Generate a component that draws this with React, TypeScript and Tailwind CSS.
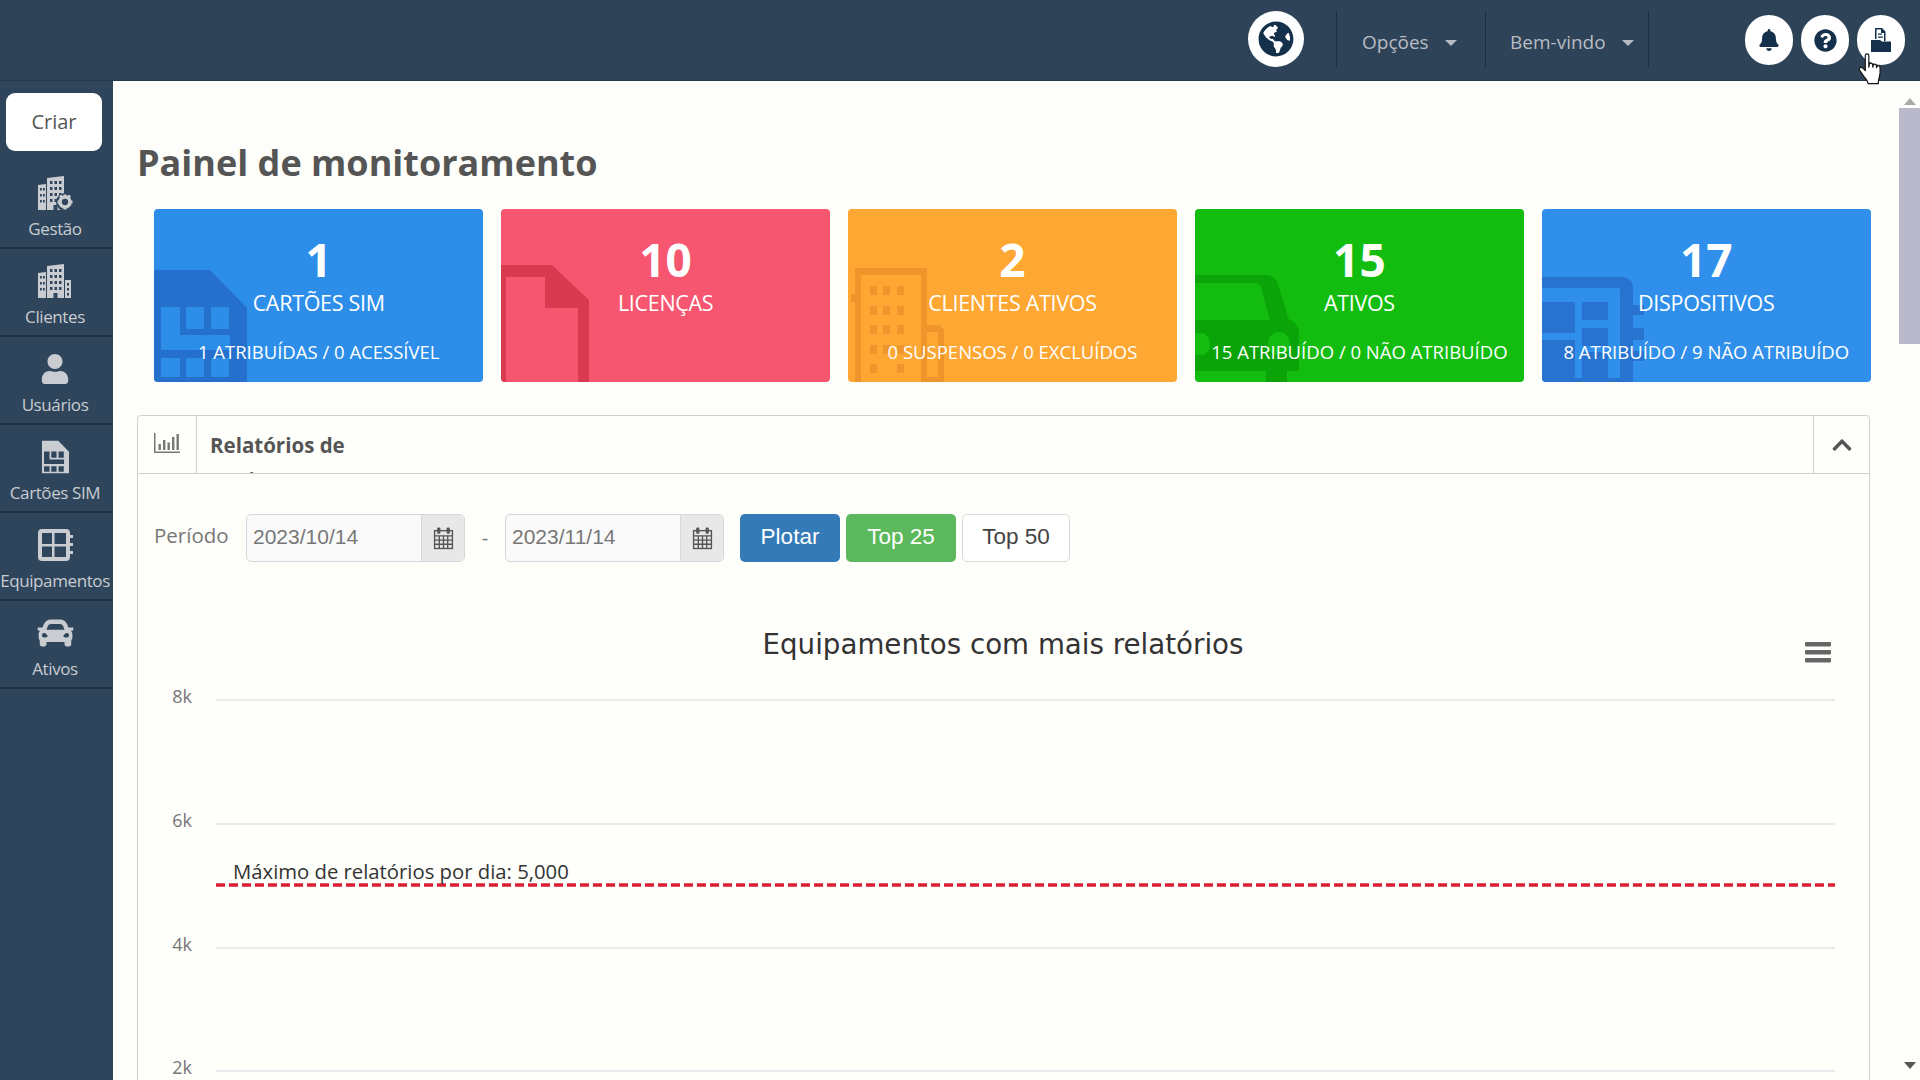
import React from 'react';
import { FaBell, FaCar, FaChevronUp, FaGlobeAmericas, FaQuestionCircle, FaUser } from 'react-icons/fa';

const simPath =
  'M0 0h56l37 38v74H0zM7 37v43h69V65H26V37zM32 37v22h18V37zM57 37v22h18V37zM7 88v19h19V88zM32 88v19h18V88zM57 88v19h18V88z';

const SimIcon = ({ className }: { className?: string }) => (
  <svg viewBox="0 0 93 112" className={className} fill="currentColor">
    <path fillRule="evenodd" d={simPath} />
  </svg>
);

const BuildingsIcon = ({ className, gear }: { className?: string; gear?: boolean }) => (
  <svg viewBox="0 0 34 34" className={className} fill="currentColor">
    <path
      fillRule="evenodd"
      d="M9 2l17-2v34H9zM12 5v3h2.500V5zM16.500 5v3H19V5zM21 5v3h2.500V5zM12 11v3h2.500v-3zM16.500 11v3H19v-3zM21 11v3h2.500v-3zM12 17v3h2.500v-3zM16.500 17v3H19v-3zM21 17v3h2.500v-3zM12 23v3h2.500v-3zM16.500 23v3H19v-3zM21 23v3h2.500v-3zM15.500 29v5h4v-5z"
    />
    <path fillRule="evenodd" d="M0 9l8-1v26H0zM2 12v2.500h1.800V12zM5 12v2.500h1.800V12zM2 18v2.500h1.800V18zM5 18v2.500h1.800V18zM2 24v2.500h1.800V24zM5 24v2.500h1.800V24z" />
    {gear ? (
      <g>
        <circle cx="27" cy="26" r="9" fill="#2e455c" />
        <circle cx="27" cy="26" r="5" fill="none" stroke="currentColor" strokeWidth="3.600" />
        <path d="M25.500 18.500h3v3h-3zM25.500 30.500h3v3h-3zM19.500 24.500h3v3h-3zM31.500 24.500h3v3h-3zM21 20.500l2-2 2 2-2 2zM29 28.500l2-2 2 2-2 2zM33 20.500l-2-2-2 2 2 2zM25 28.500l-2-2-2 2 2 2z" />
      </g>
    ) : (
      <path fillRule="evenodd" d="M27 16h6v18h-6zM29 19v2.500h2V19zM29 24v2.500h2V24zM29 29v2.500h2V29z" />
    )}
  </svg>
);

const DeviceIcon = ({ className }: { className?: string }) => (
  <svg viewBox="0 0 35 32" className={className} fill="currentColor">
    <path
      fillRule="evenodd"
      d="M4 0h24a4 4 0 0 1 4 4v24a4 4 0 0 1-4 4H4a4 4 0 0 1-4-4V4a4 4 0 0 1 4-4zM4 4v11h10V4zM16.500 4v11H28V4zM4 17.500V28h10V17.500zM16.500 17.500V28H28V17.500z"
    />
    <path d="M32 6h3v3h-3zM32 14h3v3h-3zM32 22h3v3h-3z" />
  </svg>
);

const CalendarIcon = () => (
  <svg viewBox="0 0 20 22" className="w-[21px] h-[24px] text-[#555]" fill="none" stroke="currentColor" strokeWidth="1.300">
    <rect x="1.500" y="4" width="17" height="17" fill="#e6e6e6" />
    <path d="M1.500 9h17M1.500 13h17M1.500 17h17M6 9v12M10 9v12M14 9v12" />
    <rect x="4" y="1" width="3" height="6" rx="1" fill="currentColor" stroke="none" />
    <rect x="13" y="1" width="3" height="6" rx="1" fill="currentColor" stroke="none" />
  </svg>
);

const ChartBarIcon = () => (
  <svg viewBox="0 0 26 20" className="w-[26px] h-[20px] text-[#777]" fill="currentColor">
    <path d="M0 0h1.500v18.500H26V20H0z" />
    <path d="M4.500 11h2.400v6H4.500zM9 7h2.400v10H9zM13.500 9.500h2.400V17h-2.400zM18 4h2.400v13H18zM22.500 1h2.400v16h-2.400z" />
  </svg>
);

const FolderDocIcon = () => (
  <svg viewBox="0 0 20 24" className="w-[20px] h-[24px] text-[#15304a]" fill="currentColor">
    <path d="M0 12h9l2 1.500h9V24H0z" />
    <path fillRule="evenodd" d="M4 0h7l3.500 3.500V13H13V5h-3V1.500H5.500V11H4z" />
    <path d="M7 5.500h4v1.300H7zM7 8.500h5v1.300H7z" />
  </svg>
);

const HandCursor = () => (
  <svg viewBox="0 0 20 28" className="absolute left-[1858px] top-[53px] w-[24px] h-[33px]" fill="#fff" stroke="#111" strokeWidth="1" strokeLinejoin="round">
    <path d="M6 2.200a1.500 1.500 0 0 1 3 0V12l.4-2.500a1.500 1.500 0 0 1 2.800.2L12.400 12l.3-1.600a1.400 1.400 0 0 1 2.700.3l.2 1.700.3-.9a1.400 1.400 0 0 1 2.600.5c.3 3.600.1 6.600-.7 9-.4 1.400-.8 3-.8 5H8.500c-.3-2-1.500-3.500-3-5.200L1.400 15c-.8-1-.5-2.200.4-2.700.8-.4 1.700 0 2.400.8L6 15z" />
  </svg>
);

const sideItems = [
  { label: 'Gestão', icon: <BuildingsIcon gear className="w-[36px] h-[34px]" /> },
  { label: 'Clientes', icon: <BuildingsIcon className="w-[34px] h-[34px]" /> },
  { label: 'Usuários', icon: <FaUser className="w-[28px] h-[30px]" /> },
  { label: 'Cartões SIM', icon: <SimIcon className="w-[27px] h-[34px]" /> },
  { label: 'Equipamentos', icon: <DeviceIcon className="w-[35px] h-[32px]" /> },
  { label: 'Ativos', icon: <FaCar className="w-[37px] h-[36px]" /> },
];

const ghost = 'absolute left-0 bottom-0 pointer-events-none';

const FileGhost = () => (
  <svg viewBox="0 0 88 117" className={`${ghost} w-[88px] h-[117px] text-[#d83a50]`} fill="currentColor">
    <path d="M0 0h51l37 35v82H77V43H44V12H5v105H0z" />
  </svg>
);

const BuildingGhost = () => (
  <svg viewBox="0 0 96 114" className={`${ghost} w-[96px] h-[114px] text-[#ee962b]`} fill="currentColor">
    <path fillRule="evenodd" d="M7 0h72v114H7zM13 7v107h60V7zM3 26h4v8H3z" />
    <path d="M79 57h13l4 5v52H79v-5h11V64H79z" />
    <path d="M22 18h7v9h-7zM35 18h7v9h-7zM49 18h7v9h-7zM22 38h7v9h-7zM35 38h7v9h-7zM49 38h7v9h-7zM22 57h7v9h-7zM35 57h7v9h-7zM49 57h7v9h-7zM22 77h7v9h-7zM35 77h7v9h-7zM49 77h7v9h-7zM22 96h7v9h-7zM49 96h7v9h-7z" />
  </svg>
);

const CarGhost = () => (
  <svg viewBox="0 0 106 107" className={`${ghost} w-[106px] h-[107px] text-[#0aa408]`} fill="currentColor">
    <path fillRule="evenodd" d="M0 0h70c6 0 11 3 13 9l11 36h2c4 3 8 6 8 13v38h-12v11H71V96H0zM0 8v37h75L66 12c-1-3-3-4-6-4zM0 58v22h5c8 0 10-6 10-11s-3-11-10-11zM84 57c-7 0-11 5-11 12s4 11 11 11 11-5 11-11-4-12-11-12z" />
  </svg>
);

const DeviceGhost = () => (
  <svg viewBox="0 0 102 105" className={`${ghost} w-[102px] h-[105px] text-[#2873cf]`} fill="currentColor">
    <path d="M0 0h80a11 11 0 0 1 11 11v94H78V13a2 2 0 0 0-2-2H0z" />
    <path d="M0 25h33v31H0zM0 63h33v38H0zM40 25h26v18H40zM40 51h26v18H40zM40 75h26v26H40zM0 101h78v4H0z" />
    <path d="M91 28h11v10H91zM91 51h11v12H91zM91 74h11v10H91z" />
  </svg>
);

const cards = [
  { value: '1', title: 'CARTÕES SIM', sub: '1 ATRIBUÍDAS / 0 ACESSÍVEL', bg: 'bg-[#2d8ee9]', icon: <SimIcon className={`${ghost} w-[93px] h-[112px] text-[#2470cc]`} /> },
  { value: '10', title: 'LICENÇAS', sub: '', bg: 'bg-[#f6566f]', icon: <FileGhost /> },
  { value: '2', title: 'CLIENTES ATIVOS', sub: '0 SUSPENSOS / 0 EXCLUÍDOS', bg: 'bg-[#fea733]', icon: <BuildingGhost /> },
  { value: '15', title: 'ATIVOS', sub: '15 ATRIBUÍDO / 0 NÃO ATRIBUÍDO', bg: 'bg-[#12bd0f]', icon: <CarGhost /> },
  { value: '17', title: 'DISPOSITIVOS', sub: '8 ATRIBUÍDO / 9 NÃO ATRIBUÍDO', bg: 'bg-[#2f8fea]', icon: <DeviceGhost /> },
];

const DateField = ({ value }: { value: string }) => (
  <div className="flex h-[48px] w-[219px] rounded-[5px] border border-[#d6d6dc] bg-[#fafafa]">
    <div className="flex-1 flex items-center pl-[6px] pb-[1px] font-['Liberation_Sans',sans-serif] text-[21px] text-[#777]">{value}</div>
    <div className="w-[43px] flex items-center justify-center bg-[#e8e8e8] border-l border-[#d6d6dc] rounded-r-[5px]">
      <CalendarIcon />
    </div>
  </div>
);

const grid = [700, 824, 948, 1071];
const gridLabels = ['8k', '6k', '4k', '2k'];

export default function App() {
  return (
    <div className="w-[1920px] h-[1080px] relative overflow-hidden flex flex-col bg-[#2e455c] font-['Open_Sans',sans-serif]">
      <header className="h-[81px] shrink-0 flex justify-end pr-[15px] bg-[#2e4358] border-b border-[#26374a]">
        <div className="mt-[11px] mr-[32px] w-[56px] h-[56px] rounded-full bg-white flex items-center justify-center">
          <FaGlobeAmericas className="w-[36px] h-[36px] text-[#15304a]" />
        </div>
        <div className="mt-[11px] h-[57px] w-[149px] border-l border-[#1f3040] flex items-center pl-[25px] pt-[6px] text-[19px] text-[#b8bcc2]">
          <span>Opções</span>
          <span className="ml-[16px] w-0 h-0 border-x-[6px] border-x-transparent border-t-[6px] border-t-[#b8bcc2]" />
        </div>
        <div className="mt-[11px] h-[57px] w-[164px] border-x border-[#1f3040] flex items-center pl-[24px] pt-[6px] text-[19px] text-[#b8bcc2]">
          <span>Bem-vindo</span>
          <span className="ml-[16px] w-0 h-0 border-x-[6px] border-x-transparent border-t-[6px] border-t-[#b8bcc2]" />
        </div>
        <div className="ml-[96px] mt-[15px] flex gap-[8px]">
          <div className="w-[48px] h-[50px] rounded-full bg-white flex items-center justify-center">
            <FaBell className="w-[20px] h-[22px] text-[#15304a]" />
          </div>
          <div className="w-[48px] h-[50px] rounded-full bg-white flex items-center justify-center">
            <FaQuestionCircle className="w-[23px] h-[23px] text-[#15304a]" />
          </div>
          <div className="w-[48px] h-[50px] rounded-full bg-white flex items-center justify-center">
            <FolderDocIcon />
          </div>
        </div>
      </header>

      <div className="flex-1 flex min-h-0">
        <aside className="w-[113px] shrink-0 flex flex-col text-[#c9ccd0] bg-[#2e455c]">
          <div className="h-[80px] shrink-0 pl-[6px] pt-[12px]">
            <div className="w-[96px] h-[58px] rounded-[9px] bg-white flex items-center justify-center text-[20px] text-[#555]">Criar</div>
          </div>
          {sideItems.map((item) => (
            <div key={item.label} className="h-[88px] shrink-0 pr-[3px] flex flex-col items-center border-b-2 border-[#20323f]">
              <div className="h-[34px] mt-[15px] flex items-center justify-center">{item.icon}</div>
              <div className="mt-[8px] text-[17px] leading-[22px] tracking-[-0.4px] whitespace-nowrap">{item.label}</div>
            </div>
          ))}
        </aside>

        <main className="flex-1 min-w-0 flex bg-[#fdfdf9] overflow-hidden">
          <div className="w-[1786px] shrink-0 pl-[24px]">
            <h1 className="mt-[60px] text-[36px] leading-[44px] font-bold text-[#555]">Painel de monitoramento</h1>
            <div className="ml-[17px] mt-[24px] w-[1717px] grid grid-cols-5 gap-[17.5px]">
              {cards.map((card) => (
                <div key={card.title} className={`relative h-[173px] rounded-[4px] overflow-hidden text-white text-center ${card.bg}`}>
                  {card.icon}
                  <div className="relative">
                    <div className="mt-[20px] text-[46px] leading-[60px] font-bold">{card.value}</div>
                    <div className="text-[21.500px] leading-[28px] tracking-[-0.3px]">{card.title}</div>
                    <div className="mt-[22px] text-[18.500px] leading-[26px]">{card.sub}</div>
                  </div>
                </div>
              ))}
            </div>

            <section className="mt-[33px] w-[1733px] border border-[#cfcfcf] rounded-t-[4px] bg-[#fefefb] h-[700px]">
              <div className="h-[58px] flex border-b border-[#cfcfcf]">
                <div className="w-[59px] border-r border-[#cfcfcf] flex items-center justify-center pb-[3px]">
                  <ChartBarIcon />
                </div>
                <div className="flex-1 overflow-hidden pl-[13px] pt-[12px] text-[20.500px] leading-[35px] font-bold text-[#555]">
                  <div>Relatórios de</div>
                  <div>equipamentos</div>
                </div>
                <div className="w-[56px] border-l border-[#cfcfcf] flex items-center justify-center">
                  <FaChevronUp className="w-[22px] h-[22px] text-[#555]" />
                </div>
              </div>

              <div className="pt-[39px] pl-[16px] flex items-center h-[88px]">
                <span className="w-[92px] mb-[4px] text-[20.500px] text-[#777]">Período</span>
                <DateField value="2023/10/14" />
                <span className="w-[40px] text-center text-[20px] text-[#777]">-</span>
                <DateField value="2023/11/14" />
                <div className="ml-[16px] flex gap-[6px] font-['Liberation_Sans',sans-serif] text-[22.500px]">
                  <div className="w-[100px] h-[48px] pb-[1px] rounded-[5px] bg-[#337ab7] text-white flex items-center justify-center">Plotar</div>
                  <div className="w-[110px] h-[48px] pb-[1px] rounded-[5px] bg-[#5cb85c] text-white flex items-center justify-center">Top 25</div>
                  <div className="w-[108px] h-[48px] pb-[1px] rounded-[5px] bg-white border border-[#d8d8d8] text-[#444] flex items-center justify-center">Top 50</div>
                </div>
              </div>

              <svg viewBox="138 562 1731 518" className="block w-[1731px] h-[518px]">
                <text x="1003" y="654" textAnchor="middle" fontSize="27.700" fill="#333" fontFamily="'DejaVu Sans', sans-serif">Equipamentos com mais relatórios</text>
                <g fill="#666">
                  <rect x="1805" y="642" width="26" height="4.500" rx="1" />
                  <rect x="1805" y="650" width="26" height="4.500" rx="1" />
                  <rect x="1805" y="658" width="26" height="4.500" rx="1" />
                </g>
                {grid.map((y, i) => (
                  <g key={y}>
                    <line x1="216" x2="1835" y1={y} y2={y} stroke="#e2e2ea" strokeWidth="1.500" />
                    <text x="192" y={y + 3} textAnchor="end" fontSize="18" fill="#777" fontFamily="'Open Sans', sans-serif">{gridLabels[i]}</text>
                  </g>
                ))}
                <line x1="216" x2="1835" y1="885" y2="885" stroke="#dc1e35" strokeWidth="3.500" strokeDasharray="9 4" />
                <text x="233" y="879" fontSize="20.300" fill="#333" fontFamily="'Open Sans', sans-serif">Máximo de relatórios por dia: 5,000</text>
              </svg>
            </section>
          </div>

          <div className="w-[21px] shrink-0 flex flex-col items-center">
            <div className="h-[27px] flex items-end justify-center pb-[3px]">
              <span className="w-0 h-0 border-x-[6px] border-x-transparent border-b-[7px] border-b-[#aaa]" />
            </div>
            <div className="w-full h-[236px] bg-[#b9b9cb]" />
            <div className="mt-auto h-[18px] flex items-start justify-center">
              <span className="w-0 h-0 border-x-[6px] border-x-transparent border-t-[7px] border-t-[#555]" />
            </div>
          </div>
        </main>
      </div>

      <HandCursor />
    </div>
  );
}
